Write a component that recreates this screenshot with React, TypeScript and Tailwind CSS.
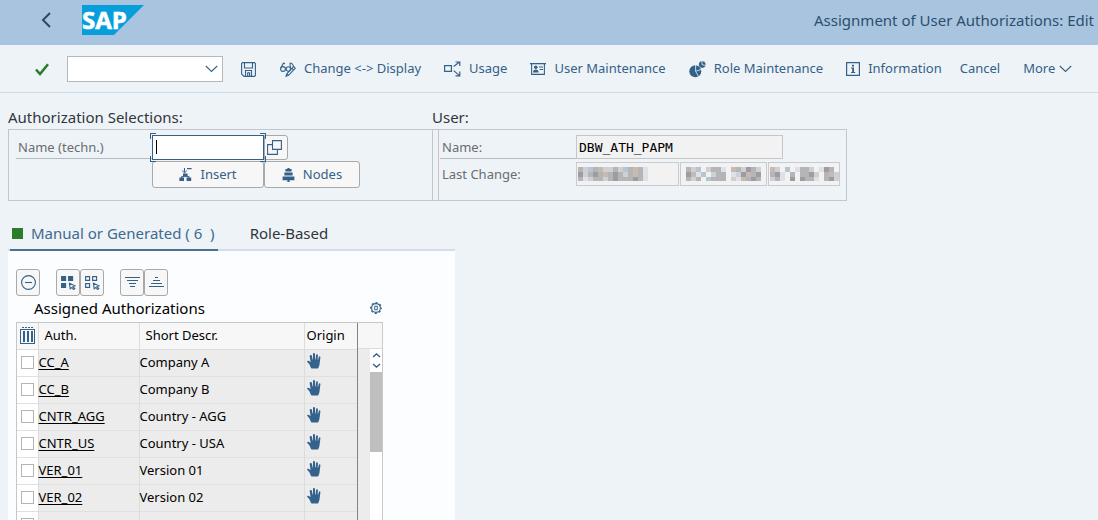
import React, { useState } from "react";

type IconProps = { className?: string };

interface Authorization {
  id: string;
  description: string;
}

const AUTHORIZATIONS: Authorization[] = [
  { id: "CC_A", description: "Company A" },
  { id: "CC_B", description: "Company B" },
  { id: "CNTR_AGG", description: "Country - AGG" },
  { id: "CNTR_US", description: "Country - USA" },
  { id: "VER_01", description: "Version 01" },
  { id: "VER_02", description: "Version 02" },
  { id: "", description: "" },
];

/* ---------- Icons ---------- */

function SapLogo() {
  return (
    <svg width="62" height="30" viewBox="0 0 62 30" role="img" aria-label="SAP" className="overflow-visible">
      <path d="M0 0H62L32 30H0Z" fill="#069fdc" />
      <text x="0" y="24" fontFamily="'Open Sans', sans-serif" fontWeight="700" fontSize="24" fill="#fff" stroke="#fff" strokeWidth="0.6">
        SAP
      </text>
    </svg>
  );
}

function BackIcon() {
  return (
    <svg width="10" height="16" viewBox="0 0 10 16" fill="none" stroke="#2a4a68" strokeWidth="2">
      <path d="M9 1L2 8L9 15" />
    </svg>
  );
}

function CheckIcon() {
  return (
    <svg width="14" height="13" viewBox="0 0 14 13" fill="none" stroke="#2b7d2b" strokeWidth="2.6">
      <path d="M1 6.5L5 11L13 1.2" />
    </svg>
  );
}

function ChevronDown({ className }: IconProps) {
  return (
    <svg width="13" height="8" viewBox="0 0 13 8" fill="none" stroke="currentColor" strokeWidth="1.1" className={className}>
      <path d="M0.8 1L6.5 6.5L12.2 1" />
    </svg>
  );
}

function SaveIcon() {
  return (
    <svg width="15" height="15" viewBox="0 0 15 15" fill="none" stroke="currentColor" strokeWidth="1.1">
      <path d="M1.5 0.6H13.5L14.4 1.5V13.5L13.5 14.4H3L0.6 12V1.5Z" />
      <path d="M3.5 0.6V6H11.5V0.6M4.5 14.4V8.5H10.5V14.4M6.7 14.4V10.8H8.6V14.4" />
    </svg>
  );
}

function DisplayChangeIcon() {
  return (
    <svg width="16" height="15" viewBox="0 0 16 15" fill="none" stroke="currentColor" strokeWidth="1.1">
      <circle cx="3" cy="7" r="2.4" />
      <circle cx="8.4" cy="7" r="2.2" />
      <path d="M0.8 6L3.4 1.2L5 1.6M10.4 5.6L10 1.2H11.6L13.6 4" />
      <path d="M13.6 4.4L15.3 6.2L8.6 13.4L6 14.3L6.8 11.8ZM12 6.4L13.8 8.2M7 12L8.5 13.4" />
    </svg>
  );
}

function UsageIcon() {
  return (
    <svg width="17" height="16" viewBox="0 0 17 16" fill="none" stroke="currentColor" strokeWidth="1.2">
      <path d="M0.6 4.6H7.4V10.4H0.6Z" />
      <path d="M9.6 5.6L15.6 1M11.5 1H15.8V5M9.6 9.6L15.6 14.6M11.5 14.8H15.8V10.6" />
    </svg>
  );
}

function UserCardIcon() {
  return (
    <svg width="16" height="13" viewBox="0 0 16 13" fill="currentColor">
      <path d="M0 0H16V1.3H0Z" />
      <path d="M1.6 1V11.4H14.4V1" fill="none" stroke="currentColor" strokeWidth="1.1" />
      <circle cx="5.8" cy="4.3" r="1.8" />
      <path d="M3 9.6C3 7.4 4.2 6.6 5.8 6.6S8.6 7.4 8.6 9.6Z" />
      <path d="M9 3.4H13V4.5H9ZM9.6 6H13V7H9.6Z" />
    </svg>
  );
}

function RoleIcon() {
  return (
    <svg width="17" height="17" viewBox="0 0 17 17" fill="currentColor">
      <circle cx="6.3" cy="10.3" r="6" />
      <circle cx="13.2" cy="3.6" r="3.3" />
      <path d="M6.6 4V10.3L9.6 15.6M6.6 10.3L12.4 8.4M13 0.4V3.6L16.4 4.4" fill="none" stroke="#eef3f8" strokeWidth="0.8" />
    </svg>
  );
}

function InfoIcon() {
  return (
    <svg width="14" height="14" viewBox="0 0 14 14" fill="currentColor">
      <path d="M0.6 0.6H13.4V13.4H0.6Z" fill="none" stroke="currentColor" strokeWidth="1.2" />
      <path d="M6 2.8H8V4.6H6ZM5 5.6H8V10H9.2V11H5V10H6.2V6.6H5Z" />
    </svg>
  );
}

function ValueHelpIcon() {
  return (
    <svg width="15" height="15" viewBox="0 0 15 15" fill="none" stroke="currentColor" strokeWidth="1.1">
      <path d="M5.5 0.6H14.4V9.4H5.5Z" />
      <path d="M5.5 4.6H0.6V14.4H10.4V9.4" />
    </svg>
  );
}

function InsertIcon() {
  return (
    <svg width="13" height="13" viewBox="0 0 13 13" fill="currentColor">
      <path d="M8 0H12.6V1.3H8ZM4 5.6H8.6V8H4ZM0.4 9.6H5V13H0.4ZM7.6 9.6H12.2V13H7.6Z" />
      <path d="M5.5 0V4.4M3.2 2.6L5.5 4.8L7.8 2.6M2.6 10V8.6H10V10" fill="none" stroke="currentColor" strokeWidth="1" />
    </svg>
  );
}

function NodesIcon() {
  return (
    <svg width="13" height="14" viewBox="0 0 13 14" fill="currentColor">
      <path d="M5.4 0H7.6V1H9.6V3.4H3.4V1H5.4ZM2.4 4.6H10.6V7.4H2.4ZM0.6 8.6H12.4V12.2H7.6V14H5.4V12.2H0.6Z" />
    </svg>
  );
}

function MinusCircleIcon() {
  return (
    <svg width="15" height="15" viewBox="0 0 15 15" fill="none" stroke="currentColor" strokeWidth="1.1">
      <circle cx="7.5" cy="7.5" r="6.9" />
      <path d="M4 7.5H11" />
    </svg>
  );
}

function SelectIcon({ filled }: { filled: boolean }) {
  return (
    <svg width="15" height="14" viewBox="0 0 15 14" fill={filled ? "currentColor" : "none"} stroke="currentColor" strokeWidth="1.1">
      <path d="M0.6 0.6H4.6V4.4H0.6ZM7.6 0.6H11.6V4.4H7.6ZM0.6 7.6H4.6V11.4H0.6Z" />
      <path d="M8.4 7.2L14 9.8L12 10.6L13.8 12.6L12.6 13.5L10.9 11.5L9.2 12.8Z" fill="#f7f7f7" />
    </svg>
  );
}

function SortIcon({ up }: { up?: boolean }) {
  return (
    <svg width="15" height="11" viewBox="0 0 15 11" fill="none" stroke="currentColor" strokeWidth="1" shapeRendering="crispEdges">
      {up ? (
        <path d="M6 0.5H9M4 3.5H11M2 6.5H13M0 9.5H15" />
      ) : (
        <path d="M0 0.5H15M2 3.5H13M4 6.5H11M5 9.5H10" />
      )}
    </svg>
  );
}

function GearIcon() {
  return (
    <svg width="13" height="12" viewBox="0 0 13 12" fill="none" stroke="currentColor">
      <circle cx="6" cy="6" r="4.4" strokeWidth="1.1" />
      <circle cx="6" cy="6" r="5.3" strokeWidth="1.2" strokeDasharray="2.2 1.96" strokeDashoffset="1.1" />
      <path d="M4.7 4.2H7.3V7.8H4.7Z" strokeWidth="1" />
    </svg>
  );
}

function ColumnsIcon() {
  return (
    <svg width="15" height="17" viewBox="0 0 15 17" fill="none" stroke="currentColor" shapeRendering="crispEdges">
      <path d="M2 0.5H4M5 0.5H7M8 0.5H10M11 0.5H13" />
      <path d="M0.5 2.5H14.5V16.5H0.5Z" />
      <path d="M3.5 4V15M7.5 4V15M11.5 4V15" strokeWidth="2" />
    </svg>
  );
}

function HandIcon() {
  return (
    <svg width="14" height="16" viewBox="0 0 14 16" fill="#34628c">
      <path d="M3.1 2.2C3.8 1.7 4.8 1.9 4.9 2.7L5.6 6.6H6V1C6 -0.2 7.9 -0.2 8 1L8.1 6.6H8.6L9.1 1.8C9.3 0.8 11 1 10.9 2L10.7 6.8H11.1L11.8 3.9C12.1 2.9 13.6 3.2 13.4 4.2L12.5 11.5C12.3 13 11.8 14 11 15.6H4.6C3.6 14.6 3.1 12.6 2.4 11.2L0.3 9C-0.3 8.1 0.5 7.4 1.4 7.7L3.6 8.9L2.7 3.2C2.6 2.8 2.7 2.4 3.1 2.2Z" />
    </svg>
  );
}

/* ---------- Masked values ---------- */

const SHADES: Record<string, string> = {
  a: "#9c9ca2",
  b: "#b5b5b8",
  c: "#cfd0d3",
  d: "#dde2e8",
  e: "#c6bbb3",
  f: "#b7c5d2",
};

function MaskedValue({ rows }: { rows: string[] }) {
  const width = rows[0].length * 5;
  return (
    <svg width={width} height="14" viewBox={`0 0 ${width} 14`} shapeRendering="crispEdges" aria-hidden="true">
      {rows.map((row, y) =>
        row.split("").map((cell, x) =>
          SHADES[cell] ? <rect key={`${x}-${y}`} x={x * 5} y={y * 5} width="5" height={y === 2 ? 4 : 5} fill={SHADES[cell]} /> : null
        )
      )}
    </svg>
  );
}

/* ---------- Page parts ---------- */

function ToolbarButton({ icon, label }: { icon?: React.ReactNode; label: string }) {
  return (
    <button type="button" className="flex items-center gap-2 whitespace-nowrap">
      {icon}
      {label}
    </button>
  );
}

const smallButton = "flex h-[27px] w-6 items-center justify-center rounded-[3px] border border-[#a9a9a9] bg-[#f7f7f7]";

function Selections() {
  const [name, setName] = useState("");
  return (
    <section className="mt-3.5 max-w-[839px]">
      <div className="mb-0.5 flex text-[15px] leading-5 text-[#32363a]">
        <h2 className="w-[424px]">Authorization Selections:</h2>
        <h2>User:</h2>
      </div>
      <div className="flex h-[72px] border border-[#c3c7ca] text-[#6a6d70]">
        <div className="w-[424px] border-r border-[#c3c7ca] pl-[7px] pt-[5px]">
          <div className="flex">
            <label htmlFor="techn" className="h-6 w-[136px] border-b border-[#b4bcc3] pl-[2px] leading-6">
              Name (techn.)
            </label>
            <div className="relative h-[25px] w-28">
              <input
                id="techn"
                value={name}
                onChange={(e) => setName(e.target.value)}
                className="h-full w-full border border-[#346187] bg-white px-1 text-black outline-none"
              />
              <span className="absolute left-1 top-[5px] h-[14px] w-px bg-black" />
              <svg width="116" height="29" viewBox="0 0 116 29" fill="none" stroke="#346187" className="pointer-events-none absolute -left-0.5 -top-0.5" shapeRendering="crispEdges">
                <path d="M0.5 6V0.5H6M110 0.5H115.5V6M115.5 23V28.5H110M6 28.5H0.5V23" />
              </svg>
            </div>
            <button type="button" aria-label="Value help" className="flex h-[25px] w-6 items-center justify-center rounded-r-[3px] border border-[#a9a9a9] bg-[#f7f7f7] pr-1 text-[#346187]">
              <ValueHelpIcon />
            </button>
          </div>
          <div className="ml-[136px] mt-px flex text-[#346187]">
            <button type="button" className="flex h-[27px] w-28 items-center justify-center gap-2 rounded-[3px] border border-[#a9a9a9] bg-[#f7f7f7]">
              <InsertIcon />
              Insert
            </button>
            <button type="button" className="flex h-[27px] w-24 items-center justify-center gap-2 rounded-[3px] border border-[#a9a9a9] bg-[#f7f7f7]">
              <NodesIcon />
              Nodes
            </button>
          </div>
        </div>
        <div className="ml-[5px] flex-1 border-l border-[#c3c7ca] pl-px pt-[5px]">
          <div className="flex">
            <label htmlFor="user" className="h-6 w-[136px] border-b border-[#b4bcc3] pl-[2px] leading-6">
              Name:
            </label>
            <input
              id="user"
              readOnly
              defaultValue="DBW_ATH_PAPM"
              className="h-6 w-[207px] border border-[#c3c7ca] bg-[#f2f2f2] px-0.5 font-['DejaVu_Sans_Mono',monospace] text-[13px] text-black outline-none"
            />
          </div>
          <div className="mt-[3px] flex">
            <span className="w-[136px] pl-[2px] leading-6">Last Change:</span>
            <div className="flex h-6 gap-px">
              <div className="flex w-[103px] items-center border border-[#c9cccf] bg-[#f2f2f2] pl-px">
                <MaskedValue rows={["bcfbeccbcfbebd", "acbabebabcbebd", "bdcbbcbabbbabd"]} />
              </div>
              <div className="flex w-[87px] items-center border border-[#c9cccf] bg-[#f2f2f2] pl-[5px]">
                <MaskedValue rows={["bcf.cbbd.ebcabc", "aedf.cbb.dcaebab", "bcb.fbbb.cdebabc"]} />
              </div>
              <div className="flex w-[72px] items-center border border-[#c9cccf] bg-[#f2f2f2] pl-px">
                <MaskedValue rows={["ec.f.dbbc.dab.", "bad.b.bbac.bec", "cbd.a.abbd.bac"]} />
              </div>
            </div>
          </div>
        </div>
      </div>
    </section>
  );
}

function AuthorizationTable() {
  return (
    <div className="flex max-w-[367px] border-l border-t border-[#c3c7ca]">
      <table className="flex-1 table-fixed border-collapse text-left text-black">
        <colgroup>
          <col className="w-[21px]" />
          <col className="w-[101px]" />
          <col className="w-[165px]" />
          <col />
        </colgroup>
        <thead>
          <tr className="h-[26px] border-b border-[#dcdcdc] bg-[#f7f7f7]">
            <th className="border-r border-[#dcdcdc] pl-[3px] text-[#346187]">
              <ColumnsIcon />
            </th>
            <th className="border-r border-[#dcdcdc] pl-1.5 font-normal">Auth.</th>
            <th className="border-r border-[#dcdcdc] pl-1.5 font-normal">Short Descr.</th>
            <th className="border-r border-[#808285] pl-0.5 font-normal">Origin</th>
          </tr>
        </thead>
        <tbody>
          {AUTHORIZATIONS.map((auth, i) => (
            <tr key={i} className="h-[27px] border-b border-[#e0e0e0] bg-[#ececec]">
              <td className="border-r border-[#dcdcdc] bg-white pl-1">
                <input
                  type="checkbox"
                  aria-label={auth.id}
                  className="block h-[13px] w-[13px] appearance-none border border-[#b4b4b4] bg-white checked:bg-[#346187]"
                />
              </td>
              <td className="border-r border-[#dcdcdc]">
                {auth.id && (
                  <a href="#" className="underline underline-offset-2">
                    {auth.id}
                  </a>
                )}
              </td>
              <td className="whitespace-nowrap border-r border-[#dcdcdc]">{auth.description}</td>
              <td className="border-r border-[#808285] pb-1 pl-0.5">{auth.id && <HandIcon />}</td>
            </tr>
          ))}
        </tbody>
      </table>
      <div className="flex w-[25px] flex-col border-r border-[#c9c9c9]">
        <div className="h-[26px] border-b border-[#dcdcdc] bg-[#f7f7f7]" />
        <div className="flex flex-1 bg-[#ececec] pl-3">
          <div className="flex w-full flex-col items-center bg-white text-[#346187]">
            <svg width="11" height="23" viewBox="0 0 11 23" fill="none" stroke="currentColor" strokeWidth="1.4">
              <path d="M2 8L5.5 5L9 8M2 15L5.5 18L9 15" />
            </svg>
            <div className="h-20 w-full bg-[#bfbfbf]" />
          </div>
        </div>
      </div>
    </div>
  );
}

export default function App() {
  return (
    <div className="flex h-screen flex-col overflow-hidden bg-[#eef3f8] font-['Noto_Sans','Open_Sans',sans-serif] text-[13px]">
      <header className="flex h-[45px] shrink-0 items-center bg-[#a9c4de] pb-[5px] pl-[41px] pr-1">
        <button type="button" aria-label="Back" className="mr-[31px]">
          <BackIcon />
        </button>
        <SapLogo />
        <h1 className="ml-auto text-[15px] text-[#2c4f70]">Assignment of User Authorizations: Edit</h1>
      </header>

      <nav className="flex h-12 shrink-0 items-center border-b border-[#cfdbe6] pl-[35px] pt-px text-[#346187]">
        <button type="button" aria-label="Continue">
          <CheckIcon />
        </button>
        <div className="relative ml-[18px] flex items-center">
          <select aria-label="Command" className="h-[26px] w-[156px] appearance-none border border-[#b4b8bb] bg-white">
            <option></option>
          </select>
          <ChevronDown className="pointer-events-none absolute right-[5px]" />
        </div>
        <button type="button" aria-label="Save" className="ml-[18px]">
          <SaveIcon />
        </button>
        <div className="ml-6 flex items-center gap-[23px]">
          <ToolbarButton icon={<DisplayChangeIcon />} label="Change <-> Display" />
          <ToolbarButton icon={<UsageIcon />} label="Usage" />
          <ToolbarButton icon={<UserCardIcon />} label="User Maintenance" />
          <ToolbarButton icon={<RoleIcon />} label="Role Maintenance" />
          <ToolbarButton icon={<InfoIcon />} label="Information" />
        </div>
        <div className="ml-[18px] flex items-center gap-[23px]">
          <ToolbarButton label="Cancel" />
          <button type="button" className="flex items-center gap-1">
            More
            <ChevronDown />
          </button>
        </div>
      </nav>

      <main className="flex min-h-0 flex-1 flex-col px-2">
        <Selections />

        <section className="mt-4 flex min-h-0 w-full max-w-[447px] flex-1 flex-col">
          <div role="tablist" className="flex border-b-2 border-[#d3deea] pl-0.5 text-[15px]">
            <button type="button" role="tab" aria-selected="true" className="-mb-0.5 flex h-[34px] items-center gap-2 whitespace-pre border-b-2 border-[#4a7092] pl-0.5 pr-[3px] text-[#41698f]">
              <span className="h-[11px] w-[11px] bg-[#2b7d2b]" />
              {"Manual or Generated ( 6  )"}
            </button>
            <button type="button" role="tab" aria-selected="false" className="ml-8 h-8 text-[#32363a]">
              Role-Based
            </button>
          </div>
          <div className="min-h-0 flex-1 overflow-hidden bg-[#fcfdfe] px-2 pt-[18px]">
            <div className="flex text-[#346187]">
              <button type="button" aria-label="Delete row" className={smallButton}>
                <MinusCircleIcon />
              </button>
              <button type="button" aria-label="Select all" className={`ml-4 ${smallButton}`}>
                <SelectIcon filled />
              </button>
              <button type="button" aria-label="Deselect all" className={smallButton}>
                <SelectIcon filled={false} />
              </button>
              <button type="button" aria-label="Sort descending" className={`ml-4 ${smallButton}`}>
                <SortIcon />
              </button>
              <button type="button" aria-label="Sort ascending" className={smallButton}>
                <SortIcon up />
              </button>
            </div>
            <div className="flex h-[26px] max-w-[367px] items-center justify-between pb-[3px] pl-[18px]">
              <h3 className="text-[15px] leading-5 text-black">Assigned Authorizations</h3>
              <button type="button" aria-label="Settings" className="text-[#346187]">
                <GearIcon />
              </button>
            </div>
            <AuthorizationTable />
          </div>
        </section>
      </main>
    </div>
  );
}
